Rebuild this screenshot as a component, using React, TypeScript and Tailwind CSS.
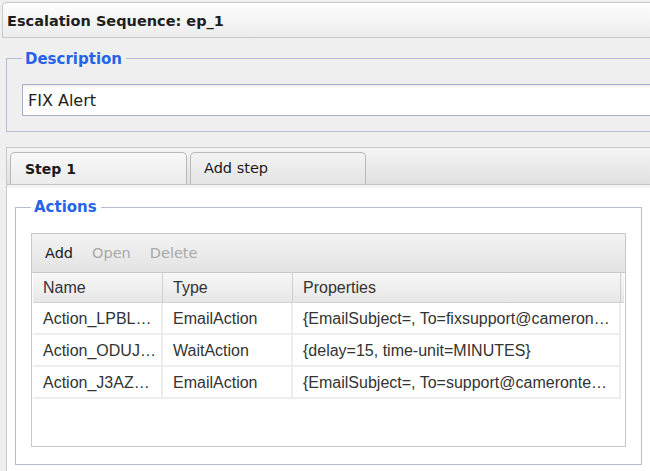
import React from "react";

// Escalation sequence editor (step 1 actions table)

interface ActionRow {
  name: string;
  type: string;
  props: string;
}

const rows: ActionRow[] = [
  { name: "Action_LPBL…", type: "EmailAction", props: "{EmailSubject=, To=fixsupport@cameron…" },
  { name: "Action_ODUJ…", type: "WaitAction", props: "{delay=15, time-unit=MINUTES}" },
  { name: "Action_J3AZ…", type: "EmailAction", props: "{EmailSubject=, To=support@cameronte…" },
];

export default function App() {
  return (
    <div className="w-[650px] h-[471px] overflow-hidden bg-[#efefef] font-['DejaVu_Sans',sans-serif] text-[#222]">
      {/* Title bar */}
      <div className="pt-[2px] pl-[2px]">
        <div className="w-[700px] h-[36px] rounded-tl-[5px] border-t border-l border-b border-[#c9c9c9] bg-gradient-to-b from-[#fdfdfd] to-[#ececec] flex items-center pl-[4px] pt-[3px] text-[14.5px] font-bold text-[#1e1e1e]">
          Escalation Sequence: ep_1
        </div>
      </div>

      {/* Description */}
      <fieldset className="ml-[6px] mt-[9px] w-[720px] border border-[#b7bbd5] pl-[15px] pt-[15px] pb-[15px]">
        <legend className="pl-[3px] pr-[4px] pt-[2px] text-[15px] leading-[20px] font-bold text-[#2563e8]">
          Description
        </legend>
        <input
          readOnly
          value="FIX Alert"
          className="block w-[690px] h-[32px] border border-[#a9afc6] bg-white pl-[5px] text-[16px] font-['DejaVu_Sans',sans-serif] text-[#1e1e1e] shadow-[inset_0_2px_2px_rgba(0,0,0,0.06)] outline-none"
        />
      </fieldset>

      {/* Steps tab panel */}
      <div className="ml-[6px] mt-[15px] w-[700px] border-t border-l border-[#c8c8c8] flex flex-col">
        <div className="h-[37px] flex items-end gap-[3px] pl-[3px] border-b border-[#c4c4c4] bg-gradient-to-b from-[#f4f4f4] to-[#e0e0e0]">
          <div className="w-[177px] h-[32px] rounded-t-[5px] border border-b-0 border-[#b9b9b9] bg-gradient-to-b from-[#f8f8f8] to-[#ebebeb] flex items-center pl-[14px] pt-[1px] text-[14px] font-bold text-[#1a1a1a]">
            Step 1
          </div>
          <div className="w-[176px] h-[32px] rounded-t-[5px] border border-b-0 border-[#b9b9b9] bg-gradient-to-b from-[#f3f3f3] to-[#e4e4e4] flex items-center pl-[13px] pt-[1px] text-[14.5px] text-[#1a1a1a]">
            Add step
          </div>
        </div>
        <div className="h-[3px] bg-[#f4f4f4]" />
        <div className="bg-white h-[300px] pl-[8px] pt-[9px]">
          {/* Actions */}
          <fieldset className="w-[627px] h-[268px] border border-[#b7bbd5] px-[15px] pt-[16px]">
            <legend className="pl-[3px] pr-[4px] text-[15px] leading-[20px] font-bold text-[#2563e8]">
              Actions
            </legend>
            <div className="h-[40px] border border-[#c8c8c8] bg-gradient-to-b from-[#f3f3f3] to-[#e3e3e3] flex items-center gap-[19px] pl-[13px] pt-[1px] text-[14.5px]">
              <span className="text-[#1a1a1a]">Add</span>
              <span className="text-[#a8a8a8]">Open</span>
              <span className="text-[#a8a8a8]">Delete</span>
            </div>
            <div className="h-[174px] border-x border-b border-[#c8c8c8] px-[1px] bg-white font-['Liberation_Sans',Arial,sans-serif] text-[16px] text-[#333]">
              <div className="flex h-[30px] border-b border-[#d2d2d2] bg-gradient-to-b from-[#f7f7f7] to-[#e7e7e7]">
                <div className="w-[130px] flex items-center pl-[10px] border-r border-[#cfcfcf]">Name</div>
                <div className="w-[130px] flex items-center pl-[10px] border-r border-[#cfcfcf]">Type</div>
                <div className="w-[328px] flex items-center pl-[10px] border-r border-[#cfcfcf]">Properties</div>
                <div className="flex-1" />
              </div>
              {rows.map((r) => (
                <div key={r.name} className="flex h-[32px]">
                  <div className="w-[130px] flex items-center pl-[10px] pt-[1px] border-r-2 border-b-2 border-[#ededed] whitespace-nowrap">{r.name}</div>
                  <div className="w-[130px] flex items-center pl-[10px] pt-[1px] border-r-2 border-b-2 border-[#ededed] whitespace-nowrap">{r.type}</div>
                  <div className="w-[328px] flex items-center pl-[10px] pt-[1px] border-r-2 border-b-2 border-[#ededed] whitespace-nowrap overflow-hidden">{r.props}</div>
                </div>
              ))}
            </div>
          </fieldset>
        </div>
      </div>
    </div>
  );
}
